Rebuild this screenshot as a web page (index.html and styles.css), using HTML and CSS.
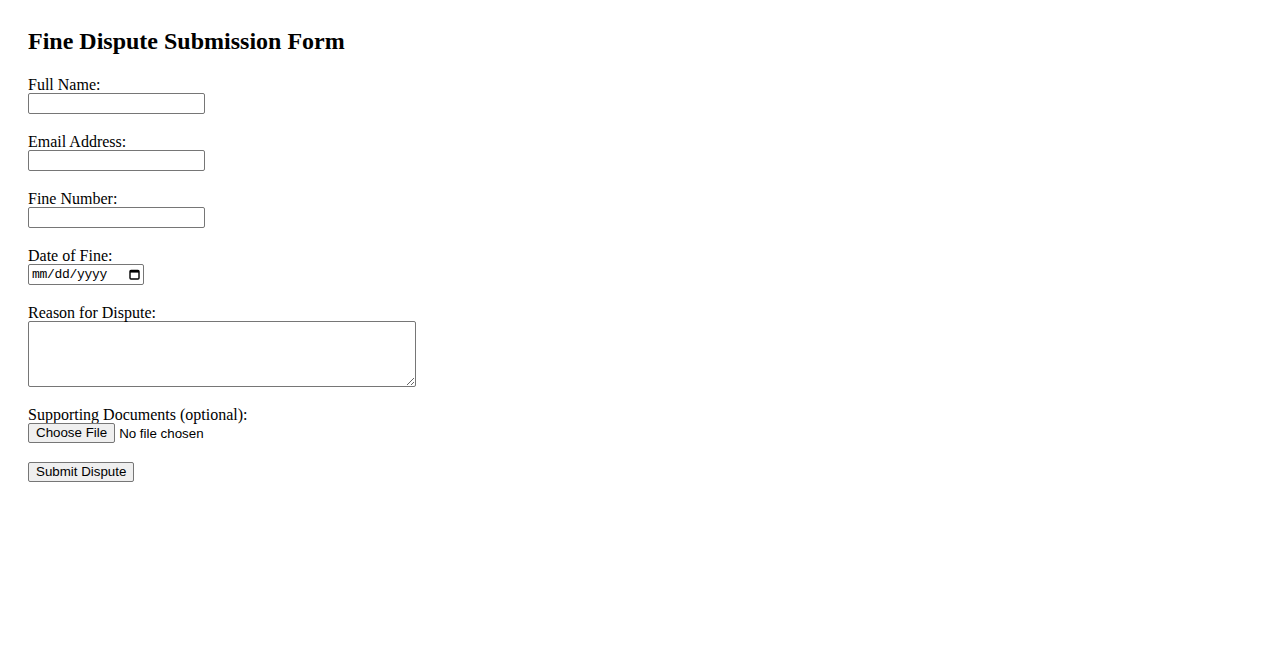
FILE: index.html
```html
<!DOCTYPE html>
<html lang="en">
<head>
    <meta charset="UTF-8">
    <meta name="viewport" content="width=device-width, initial-scale=1.0">
    <title>Fine Dispute Submission Form</title>
    <link rel="stylesheet" href="styles.css">
</head>
<body>

    <div class="container">
        <h2>Fine Dispute Submission Form</h2>

        <form id="disputeForm">
            <div class="field">
                <label for="name">Full Name:</label>
                <input type="text" id="name" class="text-input">
            </div>

            <div class="field">
                <label for="email">Email Address:</label>
                <input type="email" id="email" class="text-input">
            </div>

            <div class="field">
                <label for="fine">Fine Number:</label>
                <input type="text" id="fine" class="text-input">
            </div>

            <div class="field">
                <label for="date">Date of Fine:</label>
                <div class="date-input">
                    <span class="date-text">mm/dd/yyyy</span>
                    <svg class="cal-icon" width="11" height="11" viewBox="0 0 11 11">
                        <rect x="1" y="1.5" width="9" height="8.5" rx="1" fill="none" stroke="#000" stroke-width="1.4"/>
                        <rect x="1" y="1" width="9" height="2.6" fill="#000"/>
                    </svg>
                </div>
            </div>

            <div class="field">
                <label for="reason">Reason for Dispute:</label>
                <textarea id="reason" class="reason"></textarea>
            </div>

            <div class="field file-field">
                <label for="docs">Supporting Documents (optional):</label>
                <div class="file-row">
                    <button type="button" class="btn">Choose File</button>
                    <span class="file-status">No file chosen</span>
                </div>
            </div>

            <button type="button" class="btn">Submit Dispute</button>
        </form>
    </div>

</body>
</html>
```

FILE: styles.css
```css
body {
    font-family: "Liberation Serif", "Times New Roman", serif;
    font-size: 16px;
    margin: 8px;
    color: #000;
    background: #fff;
}
.container {
    padding: 20px;
}
h2 {
    font-size: 24px;
    margin: 0 0 19px 0;
    line-height: 27px;
}
.field {
    margin-bottom: 17px;
}
.field label {
    display: block;
    line-height: 18px;
    height: 17px;
    padding-top: 2px;
}
.text-input {
    display: block;
    box-sizing: border-box;
    width: 177px;
    height: 21px;
    margin: 0;
    border: 1px solid #767676;
    border-radius: 2px;
    padding: 1px 2px;
    font-family: "Liberation Sans", Arial, sans-serif;
    font-size: 13.33px;
}
.date-input {
    box-sizing: border-box;
    width: 116px;
    height: 21px;
    border: 1px solid #767676;
    border-radius: 2px;
    display: flex;
    align-items: center;
    justify-content: space-between;
    padding: 0 3px 0 3px;
}
.date-text {
    font-family: "Liberation Mono", "Courier New", monospace;
    font-size: 13px;
    letter-spacing: -0.3px;
    color: #000;
}
.cal-icon {
    display: block;
}
.reason {
    display: block;
    box-sizing: border-box;
    width: 388px;
    height: 66px;
    margin: 0;
    border: 1px solid #767676;
    border-radius: 2px;
    font-family: "Liberation Mono", monospace;
    font-size: 13.33px;
}
.file-field {
    margin-bottom: 19px;
}
.file-row {
    display: flex;
    align-items: center;
    height: 20px;
}
.btn {
    box-sizing: border-box;
    height: 20px;
    margin: 0;
    padding: 1px 7px;
    font-family: "Liberation Sans", Arial, sans-serif;
    font-size: 13.33px;
    color: #000;
    background: #efefef;
    border: 1px solid #767676;
    border-radius: 2px;
    line-height: 16px;
}
.file-status {
    margin-left: 4px;
    font-family: "Liberation Sans", Arial, sans-serif;
    font-size: 13.33px;
}
```
